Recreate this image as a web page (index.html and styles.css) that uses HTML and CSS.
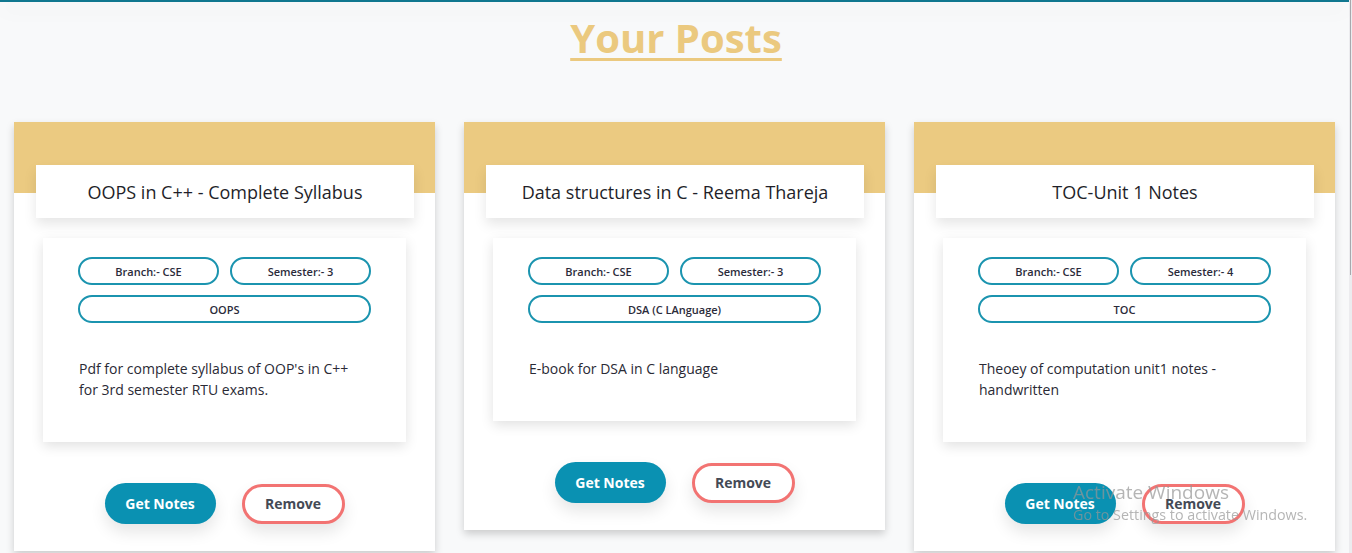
FILE: index.html
```html
<!DOCTYPE html>
<html lang="en">
<head>
<meta charset="utf-8">
<title>Your Posts</title>
<link rel="stylesheet" href="styles.css">
</head>
<body>
<div class="topbar"></div>
<h1 class="page-title">Your Posts</h1>
<main class="cards">
  <article class="card">
    <header class="card-head"><h2 class="card-title">OOPS in C++ - Complete Syllabus</h2></header>
    <section class="card-info">
      <div class="tags">
        <span class="tag">Branch:- CSE</span>
        <span class="tag">Semester:- 3</span>
        <span class="tag tag-wide">OOPS</span>
      </div>
      <p class="desc">Pdf for complete syllabus of OOP's in C++ for 3rd semester RTU exams.</p>
    </section>
    <div class="actions">
      <button class="btn btn-primary">Get Notes</button>
      <button class="btn btn-outline">Remove</button>
    </div>
  </article>
  <article class="card">
    <header class="card-head"><h2 class="card-title">Data structures in C - Reema Thareja</h2></header>
    <section class="card-info">
      <div class="tags">
        <span class="tag">Branch:- CSE</span>
        <span class="tag">Semester:- 3</span>
        <span class="tag tag-wide">DSA (C LAnguage)</span>
      </div>
      <p class="desc">E-book for DSA in C language</p>
    </section>
    <div class="actions">
      <button class="btn btn-primary">Get Notes</button>
      <button class="btn btn-outline">Remove</button>
    </div>
  </article>
  <article class="card">
    <header class="card-head"><h2 class="card-title">TOC-Unit 1 Notes</h2></header>
    <section class="card-info">
      <div class="tags">
        <span class="tag">Branch:- CSE</span>
        <span class="tag">Semester:- 4</span>
        <span class="tag tag-wide">TOC</span>
      </div>
      <p class="desc">Theoey of computation unit1 notes - handwritten</p>
    </section>
    <div class="actions">
      <button class="btn btn-primary">Get Notes</button>
      <button class="btn btn-outline">Remove</button>
    </div>
  </article>
</main>
<div class="watermark">
  <div class="wm-title">Activate Windows</div>
  <div class="wm-sub">Go to Settings to activate Windows.</div>
</div>
<div class="scrollbar"><div class="scroll-thumb"></div></div>
</body>
</html>
```
FILE: styles.css
```css
* { box-sizing: border-box; }

html, body {
  margin: 0;
  padding: 0;
}

body {
  background: #f8f9fa;
  font-family: "Open Sans", "Noto Sans", sans-serif;
  color: #222;
  height: 553px;
  overflow: hidden;
}

.topbar {
  position: relative;
  z-index: 2;
  height: 2px;
  margin-right: 3px;
  background: #10778f;
  box-shadow: 0 6px 20px rgba(0, 0, 0, 0.13);
}

.page-title {
  margin: 12px 0 0;
  text-align: center;
  font-size: 40px;
  line-height: 48px;
  font-weight: 700;
  color: #ebc97f;
  text-decoration: underline;
  text-decoration-thickness: 3px;
  text-underline-offset: 5px;
}

.cards {
  display: flex;
  align-items: flex-start;
  gap: 29px;
  padding: 0 14px;
  margin-top: 60px;
}

.card {
  width: 421px;
  flex: 0 0 421px;
  background: #fff;
  box-shadow: 0 4px 8px rgba(0, 0, 0, 0.18);
}

.card-head {
  display: flow-root;
  background: #ebca81;
  padding: 43px 21px 0 22px;
}

.card-title {
  position: relative;
  z-index: 1;
  margin: 0 0 -25px;
  height: 53px;
  background: #fff;
  box-shadow: 0 6px 12px rgba(0, 0, 0, 0.1);
  display: flex;
  align-items: center;
  justify-content: center;
  font-size: 18px;
  font-weight: 500;
  color: #1f1f2a;
}

.card-info {
  margin: 45px 29px 0;
  padding: 19px 35px 42px;
  background: #fff;
  box-shadow: 0 4px 12px rgba(0, 0, 0, 0.12);
}

.tags {
  display: grid;
  grid-template-columns: 1fr 1fr;
  gap: 10px 11px;
}

.tag {
  height: 28px;
  border: 2px solid #1b94af;
  border-radius: 14px;
  display: flex;
  align-items: center;
  justify-content: center;
  font-size: 11px;
  font-weight: 600;
  color: #2b2b3a;
}

.tag-wide {
  grid-column: 1 / 3;
}

.desc {
  margin: 35px 0 0 1px;
  font-size: 14px;
  line-height: 21px;
  color: #2a2a35;
  padding-right: 20px;
}

.actions {
  display: flex;
  justify-content: center;
  align-items: center;
  gap: 26px;
  padding: 41px 0 27px;
}

.btn {
  font-family: inherit;
  font-size: 14px;
  font-weight: 700;
  height: 41px;
  border-radius: 21px;
  cursor: pointer;
  box-shadow: 0 8px 16px rgba(0, 0, 0, 0.1);
}

.btn-primary {
  width: 111px;
  background: #0a91b2;
  color: #fff;
  border: none;
}

.btn-outline {
  width: 103px;
  height: 40px;
  background: #fff;
  color: #444a55;
  border: 3px solid #f27372;
}

.watermark {
  position: fixed;
  left: 1073px;
  top: 480px;
  color: rgba(150, 150, 150, 0.7);
  pointer-events: none;
}

.wm-title {
  font-size: 19px;
  line-height: 25px;
}

.wm-sub {
  font-size: 14.3px;
  line-height: 20px;
}

.scrollbar {
  position: fixed;
  top: 0;
  right: 0;
  width: 3px;
  height: 553px;
  background: #ececef;
}

.scroll-thumb {
  width: 1px;
  margin-left: 1px;
  height: 275px;
  background: #a8a8ad;
}
```
